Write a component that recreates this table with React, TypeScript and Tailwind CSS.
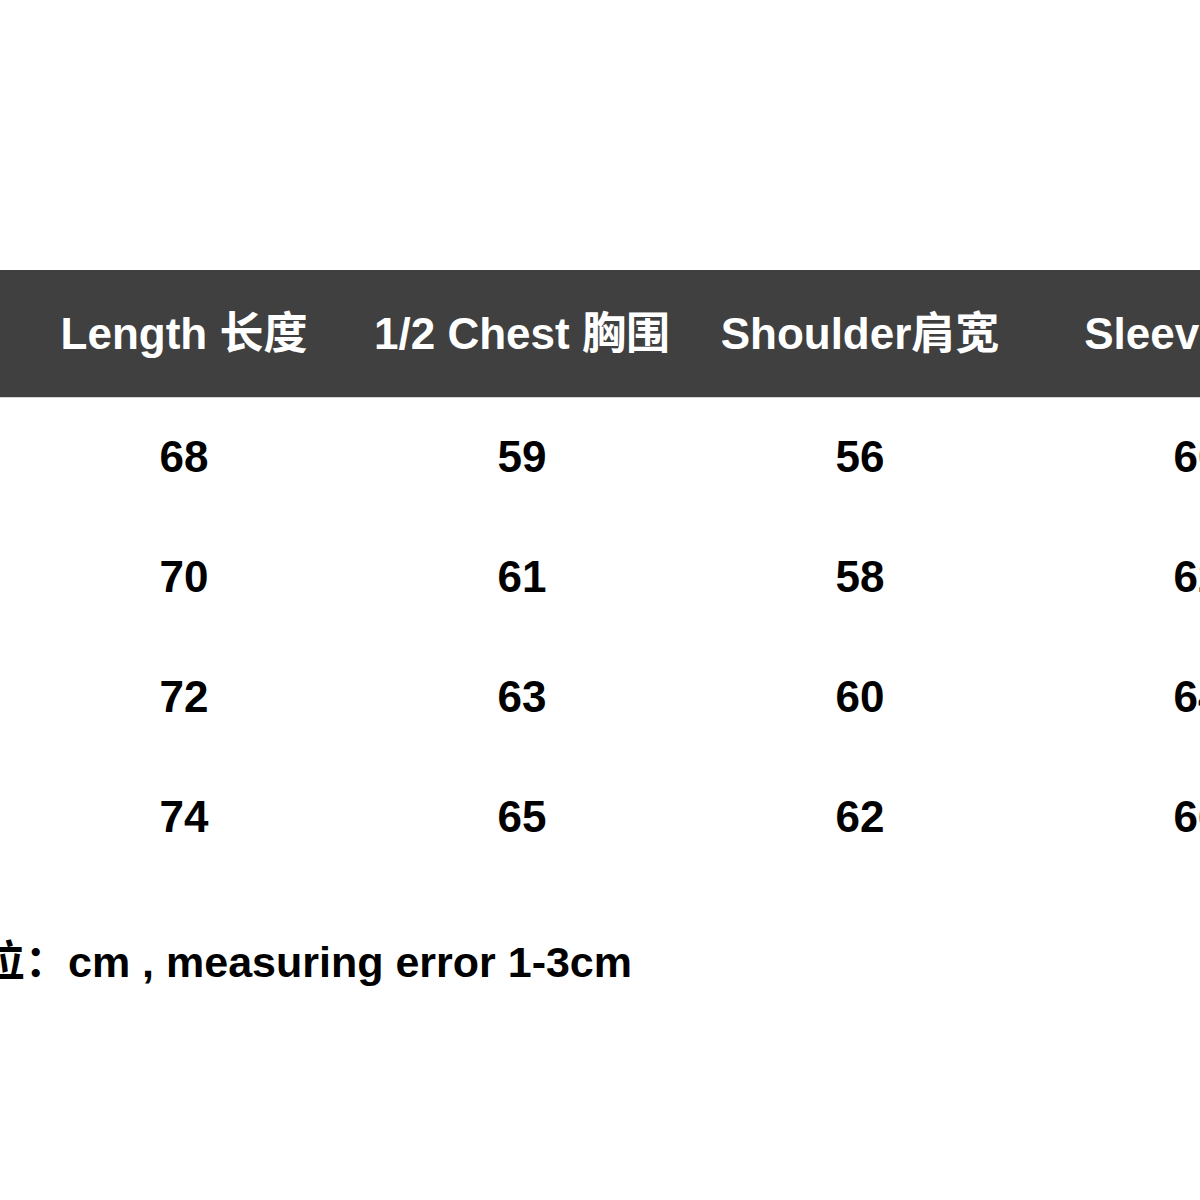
import React from "react";

const font = {
  fontFamily: '"Liberation Sans", Arial, "Noto Sans CJK SC", sans-serif',
};

const headers = ["Size 尺码", "Length 长度", "1/2 Chest 胸围", "Shoulder肩宽", "Sleeve袖长"];
const rows = [
  ["S", "68", "59", "56", "60"],
  ["M", "70", "61", "58", "62"],
  ["L", "72", "63", "60", "64"],
  ["XL", "74", "65", "62", "66"],
];

export default function App() {
  return (
    <div className="w-[1200px] h-[1200px] overflow-hidden bg-white" style={font}>
      <div className="pt-[270px] ml-[-323px] w-[1690px]">
        <div className="grid grid-cols-[repeat(5,338px)] h-[128px] bg-[#404040] border-b border-[#d4d4d4] text-white font-bold text-[44px] items-center">
          {headers.map((h) => (
            <div key={h} className="text-center whitespace-nowrap">
              {h}
            </div>
          ))}
        </div>
        {rows.map((r, i) => (
          <div key={i} className="grid grid-cols-[repeat(5,338px)] h-[120px] pb-[3px] items-center font-bold text-[44px] text-black">
            {r.map((c, j) => (
              <div key={j} className="text-center">
                {c}
              </div>
            ))}
          </div>
        ))}
      </div>
      <div className="mt-[60px] ml-[-61px] text-[43px] leading-[48px] font-bold text-black whitespace-nowrap">
        单位：cm , measuring error 1-3cm
      </div>
    </div>
  );
}
